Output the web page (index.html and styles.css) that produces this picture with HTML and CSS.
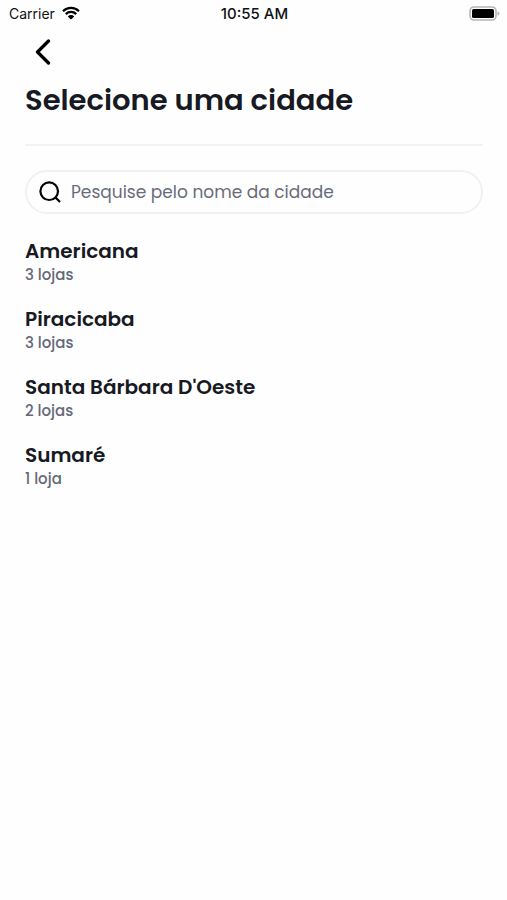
FILE: index.html
```html
<!DOCTYPE html>
<html lang="pt-BR">
<head>
<meta charset="utf-8">
<meta name="viewport" content="width=device-width, initial-scale=1">
<title>Selecione uma cidade</title>
<link rel="stylesheet" href="styles.css">
</head>
<body>
<div class="status">
  <div class="carrier">
    <span>Carrier</span>
    <svg class="wifi" viewBox="0 0 18 14" aria-hidden="true">
      <path d="M1 5.2a11.4 11.4 0 0 1 16 0M3.8 8.1a7.4 7.4 0 0 1 10.4 0" fill="none" stroke="#000" stroke-width="2.3"/>
      <path d="M9 13.6 5.8 10.4a4.5 4.5 0 0 1 6.4 0z"/>
    </svg>
  </div>
  <time class="time">10:55 AM</time>
  <svg class="battery" viewBox="0 0 31 15" aria-hidden="true">
    <rect x="1" y="1" width="26" height="13" rx="4" fill="#fff" stroke="#b5b5b5" stroke-width="1.6"/>
    <rect x="3" y="3" width="22" height="9" rx="1.6"/>
    <path d="M28.5 5.2q2 .8 2 2.3t-2 2.3z" fill="#b5b5b5"/>
  </svg>
</div>
<main class="page">
  <button class="back" type="button" aria-label="Voltar">
    <svg viewBox="0 0 16 26" aria-hidden="true"><path d="M13.5 2 2.5 13l11 11" fill="none" stroke="#000" stroke-width="3.2" stroke-linecap="round" stroke-linejoin="round"/></svg>
  </button>
  <h1 class="title">Selecione uma cidade</h1>
  <label class="search">
    <svg viewBox="0 0 22 22" aria-hidden="true"><g fill="none" stroke="#000" stroke-width="2.2"><circle cx="10.2" cy="10.2" r="8.8"/><path d="m16.4 16.4 4.6 4.6"/></g></svg>
    <input type="search" placeholder="Pesquise pelo nome da cidade" aria-label="Pesquise pelo nome da cidade">
  </label>
  <ul class="cities">
    <li><h2>Americana</h2><p>3 lojas</p></li>
    <li><h2>Piracicaba</h2><p>3 lojas</p></li>
    <li><h2>Santa Bárbara D'Oeste</h2><p>2 lojas</p></li>
    <li><h2>Sumaré</h2><p>1 loja</p></li>
  </ul>
</main>
</body>
</html>
```
FILE: styles.css
```css
* {
  box-sizing: border-box;
}

body {
  margin: 0;
  background: #fefefe;
  color: #171923;
  font-family: Poppins, Inter, sans-serif;
}

.status {
  display: grid;
  grid-template-columns: 1fr auto 1fr;
  align-items: center;
  height: 26px;
  padding: 0 7px 0 9px;
  color: #111;
  font-family: Inter, sans-serif;
  font-size: 14px;
}

.carrier {
  display: flex;
  align-items: center;
  gap: 7px;
}

.wifi {
  width: 18px;
  height: 14px;
}

.time {
  font-size: 15px;
  font-weight: 500;
}

.battery {
  justify-self: end;
  width: 31px;
  height: 15px;
}

.page {
  padding: 0 24px 0 25px;
}

.back {
  display: flex;
  align-items: center;
  justify-content: center;
  width: 36px;
  height: 52px;
  padding: 0;
  border: 0;
  background: none;
}

.back svg {
  width: 16px;
  height: 26px;
}

.title {
  margin: 0;
  padding-bottom: 22px;
  border-bottom: 2px solid #f1f2f3;
  font-size: 29px;
  font-weight: 600;
  line-height: 44px;
}

.search {
  display: flex;
  align-items: center;
  gap: 10px;
  height: 44px;
  margin-top: 24px;
  padding: 0 12px;
  border: 2px solid #f0f1f2;
  border-radius: 22px;
}

.search svg {
  flex: none;
  width: 22px;
  height: 22px;
}

.search input {
  flex: 1;
  min-width: 0;
  padding: 0;
  border: 0;
  outline: 0;
  background: none;
  color: #171923;
  font: inherit;
  font-size: 17px;
}

.search input::placeholder {
  color: #686c7a;
  opacity: 1;
}

.cities {
  display: grid;
  gap: 20px;
  margin: 24px 0;
  padding: 0;
  list-style: none;
}

.cities h2 {
  margin: 0;
  font-size: 20px;
  font-weight: 600;
  line-height: 26px;
}

.cities p {
  margin: 0;
  color: #646878;
  font-size: 15px;
  font-weight: 500;
  line-height: 22px;
}
```
